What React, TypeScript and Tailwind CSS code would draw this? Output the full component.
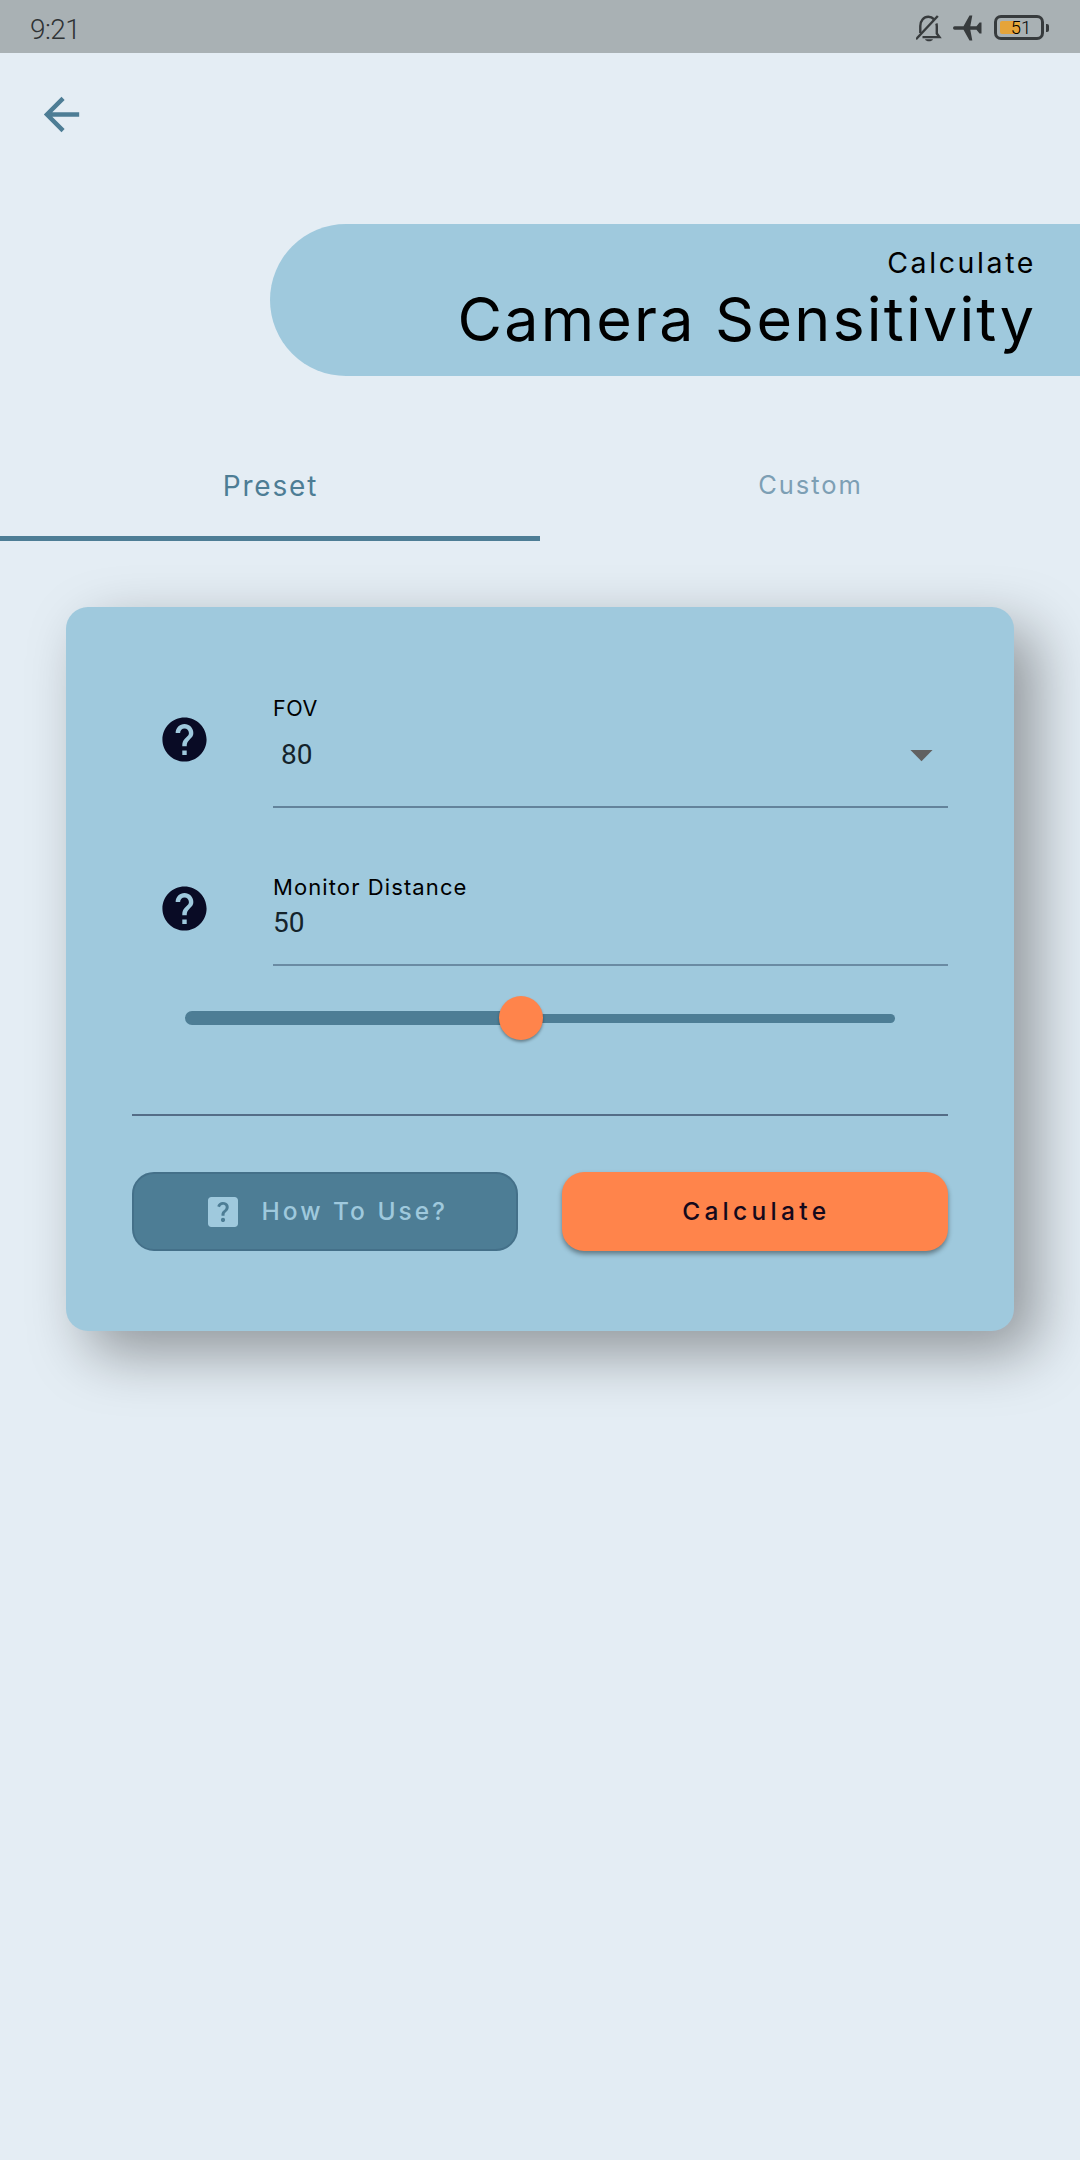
import { MdArrowBack, MdArrowDropDown, MdHelp, MdHelpCenter } from 'react-icons/md';

function StatusBar() {
  return (
    <header className="flex h-[53px] items-center justify-between bg-[#a9b1b4] pr-[31px] pl-[30px] text-[#2f3335]">
      <span className="mt-[6px] font-[Roboto] text-[28px] leading-[32px] font-light tracking-[-0.6px]">9:21</span>
      <div className="mt-[2px] flex items-center">
        <svg width="27" height="28" viewBox="0 0 27 28" fill="none" stroke="#373b3d" strokeWidth="2.4" className="mr-[10px]">
          <path d="M4.3 19V12C4.3 6.8 7.6 2.8 12.3 2.8c2.2 0 4.2.8 5.5 2.3M20.3 9.5c.4 1 .5 2 .5 3v7l2.6 3.6H6.5" />
          <path d="M0 25.3 21.8 2" />
          <path d="M9 25.2h8c-.6 1.4-2.2 2-4 2s-3.4-.6-4-2z" fill="#373b3d" stroke="none" />
        </svg>
        <svg width="29" height="26" viewBox="0 0 29 26" fill="#373b3d" className="mr-[12px]">
          <path d="M1.7 11.3H10.5L16.5.5H19.3L17.3 11.3H23.5L26.5 7.5H28.5V18.5H26.5L23.5 14.7H17.3L19.3 25.5H16.5L10.5 14.7H1.7A1.7 1.7 0 0 1 1.7 11.3Z" />
        </svg>
        <div className="relative flex h-[25px] w-[50px] items-center justify-center rounded-[7px] border-[3px] border-[#373b3d] pl-[4px]">
          <div className="absolute top-[3px] bottom-[3px] left-[3px] w-[20px] rounded-[2px] bg-[#e5a43a]" />
          <span className="relative mt-[2px] font-[Roboto] text-[18.5px] leading-[19px] font-light text-black">51</span>
        </div>
        <div className="ml-[2px] h-[8px] w-[3px] rounded-r-[2px] bg-[#373b3d]" />
      </div>
    </header>
  );
}

function Banner() {
  return (
    <div className="mt-[83px] ml-[270px] flex h-[152px] flex-col items-end rounded-l-full bg-[#9fc9dd] pt-[19px] pr-[46px] whitespace-nowrap text-black">
      <p className="-mr-[2px] text-[28.5px] leading-[40px] tracking-[2.6px]">Calculate</p>
      <h1 className="-mr-[2.2px] text-[61px] leading-[73px] tracking-[2.2px]">Camera Sensitivity</h1>
    </div>
  );
}

function Tabs() {
  return (
    <nav className="mt-[54px] grid h-[111px] grid-cols-2 text-center text-[#4d7d95]">
      <button className="flex items-start justify-center border-b-[5px] border-[#4d7d95] pt-[36px] text-[28px] leading-[40px] tracking-[1.8px]">
        <span className="-mr-px">Preset</span>
      </button>
      <button className="flex items-start justify-center pt-[35px] text-[25.5px] leading-[40px] tracking-[1.9px] text-[#7d9fb4]">
        <span className="-mr-px">Custom</span>
      </button>
    </nav>
  );
}

function Slider() {
  return (
    <div className="relative mt-[30px] mr-[53px] ml-[53px] flex h-[44px] items-center">
      <div className="h-[14px] w-[336px] rounded-l-full bg-[#4d7d95]" />
      <div className="h-[9px] flex-1 rounded-r-full bg-[#4d7d95]" />
      <div className="absolute top-0 left-[314.4px] size-[44px] rounded-full bg-[#ff844b] shadow-[0_2px_3px_rgba(0,0,0,0.35)]" />
    </div>
  );
}

function Card() {
  return (
    <main className="mx-[66px] mt-[66px] flex h-[724px] flex-col rounded-[22px] bg-[#9fc9dd] px-[66px] pt-[86px] shadow-[22px_22px_58px_rgba(0,4,0,0.37)]">
      <section className="flex h-[115px]">
        <MdHelp className="mt-[20px] ml-[26.3px] size-[53px] shrink-0 text-[#090b25]" />
        <div className="ml-[61.7px] flex-1 border-b-2 border-[#63839b]">
          <div className="text-[21.5px] leading-[30px] tracking-[0.6px] text-black">FOV</div>
          <div className="mt-px flex h-[60px] items-center justify-between pl-[8px]">
            <span className="mt-[2px] font-[Roboto] text-[28px] text-[#14232b]">80</span>
            <MdArrowDropDown className="size-[53px] text-[#616161]" />
          </div>
        </div>
      </section>
      <section className="mt-[65px] flex h-[93px]">
        <MdHelp className="mt-[9px] ml-[26.3px] size-[53px] shrink-0 text-[#090b25]" />
        <div className="ml-[61.7px] flex-1 border-b-2 border-[#6a8ba3]">
          <div className="-mt-px text-[22px] leading-[30px] tracking-[1.1px] text-black">Monitor Distance</div>
          <div className="mt-[2px] font-[Roboto] text-[28px] leading-[38px] text-[#14232b]">50</div>
        </div>
      </section>
      <Slider />
      <hr className="mt-[74px] border-t-2 border-[#546d87]" />
      <div className="mt-[56px] grid h-[79px] grid-cols-2 gap-[44px] text-[24.5px] font-medium">
        <button className="flex items-center rounded-[22px] border-2 border-[#447089] bg-[#4d7d95] pl-[69px] tracking-[3px] text-[#9fc9dd]">
          <MdHelpCenter className="mr-[18.5px] size-[40px]" />
          <span className="whitespace-nowrap">How To Use?</span>
        </button>
        <button className="flex items-center justify-center rounded-[22px] bg-[#ff844b] tracking-[4.3px] text-[#15091c] shadow-[0_3px_5px_rgba(0,0,0,0.4)]">
          <span className="-mr-[2.5px]">Calculate</span>
        </button>
      </div>
    </main>
  );
}

export default function App() {
  return (
    <div className="h-[2160px] w-[1080px] overflow-hidden bg-[#e4edf4] font-[Inter,sans-serif]">
      <StatusBar />
      <MdArrowBack className="mt-[35px] ml-[35px] size-[53px] text-[#4d7d95]" />
      <Banner />
      <Tabs />
      <Card />
    </div>
  );
}
